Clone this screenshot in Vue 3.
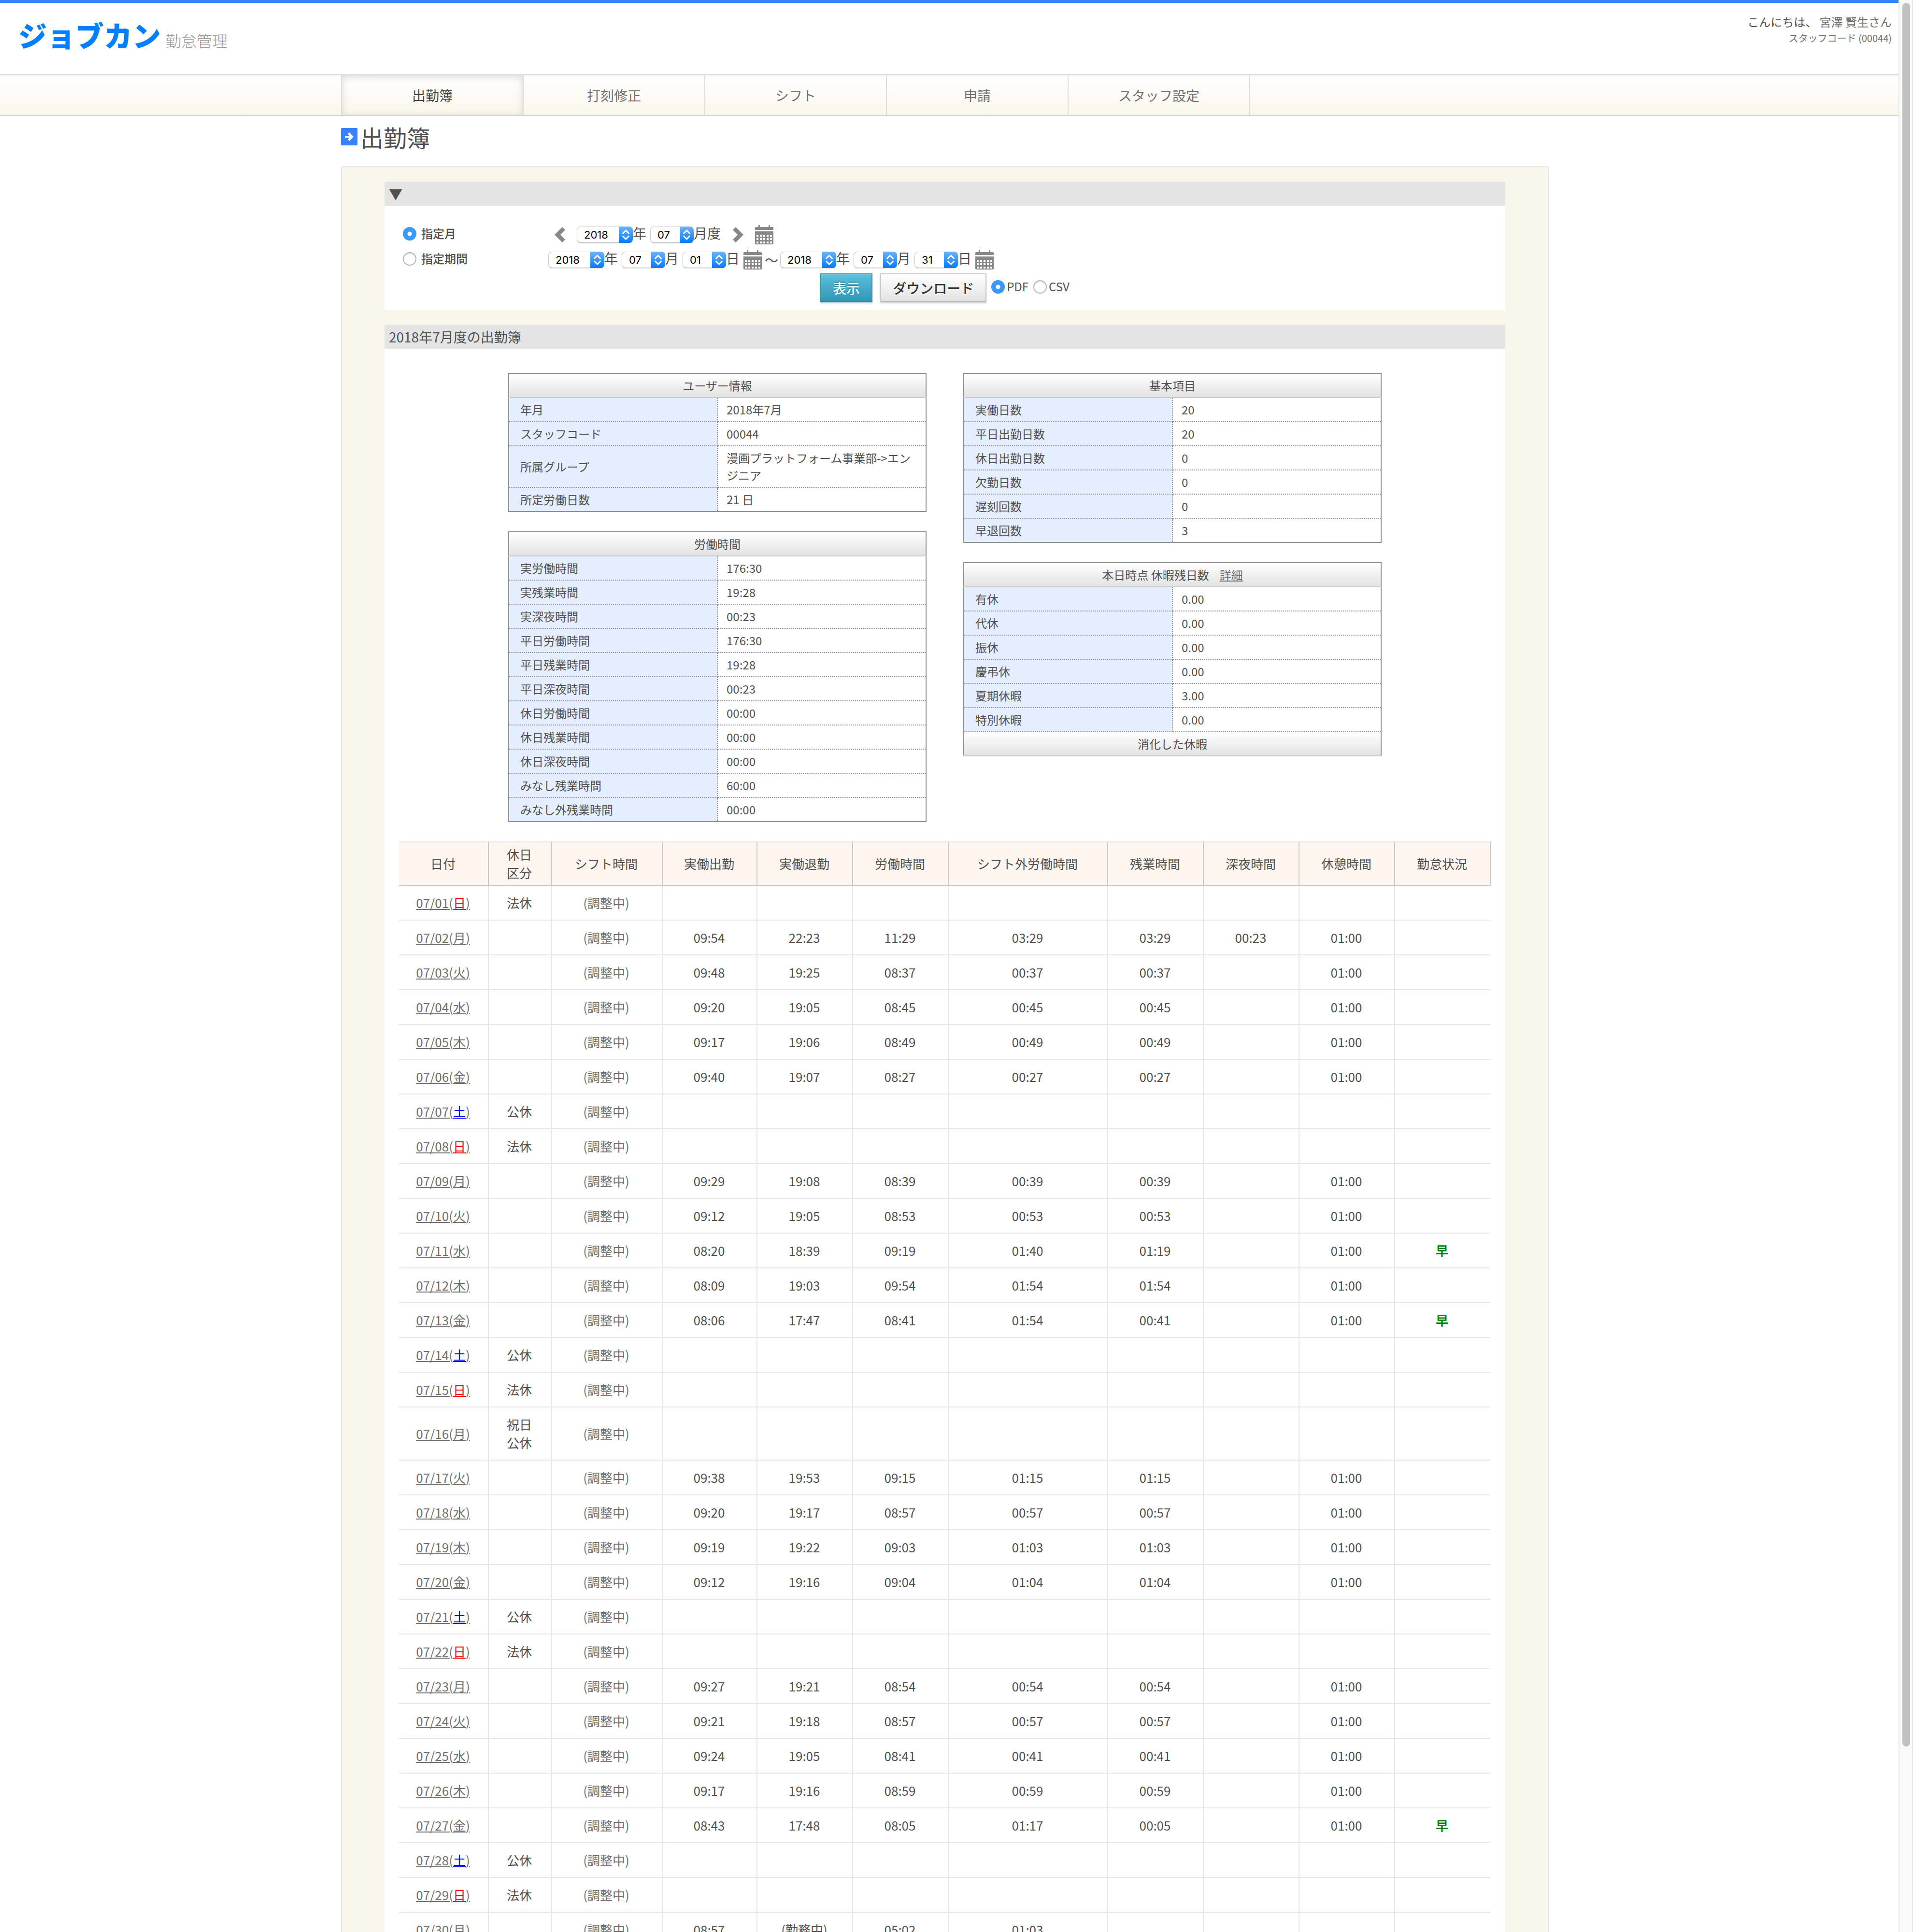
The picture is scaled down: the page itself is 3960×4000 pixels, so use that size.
<script setup>
import { ref } from 'vue'

const tabs = ['出勤簿', '打刻修正', 'シフト', '申請', 'スタッフ設定']

const rangeMode = ref('month')
const fileType = ref('pdf')

const userInfo = {
  title: 'ユーザー情報',
  rows: [
    ['年月', '2018年7月'],
    ['スタッフコード', '00044'],
    ['所属グループ', '漫画プラットフォーム事業部->エンジニア'],
    ['所定労働日数', '21 日'],
  ],
}
const workTime = {
  title: '労働時間',
  rows: [
    ['実労働時間', '176:30'],
    ['実残業時間', '19:28'],
    ['実深夜時間', '00:23'],
    ['平日労働時間', '176:30'],
    ['平日残業時間', '19:28'],
    ['平日深夜時間', '00:23'],
    ['休日労働時間', '00:00'],
    ['休日残業時間', '00:00'],
    ['休日深夜時間', '00:00'],
    ['みなし残業時間', '60:00'],
    ['みなし外残業時間', '00:00'],
  ],
}
const basics = {
  title: '基本項目',
  rows: [
    ['実働日数', '20'],
    ['平日出勤日数', '20'],
    ['休日出勤日数', '0'],
    ['欠勤日数', '0'],
    ['遅刻回数', '0'],
    ['早退回数', '3'],
  ],
}
const vacation = {
  title: '本日時点 休暇残日数',
  link: '詳細',
  footer: '消化した休暇',
  rows: [
    ['有休', '0.00'],
    ['代休', '0.00'],
    ['振休', '0.00'],
    ['慶弔休', '0.00'],
    ['夏期休暇', '3.00'],
    ['特別休暇', '0.00'],
  ],
}
const columns = [
  [userInfo, workTime],
  [basics, vacation],
]

const heads = ['日付', '休日\n区分', 'シフト時間', '実働出勤', '実働退勤', '労働時間', 'シフト外労働時間', '残業時間', '深夜時間', '休憩時間', '勤怠状況']

// [出勤, 退勤, 労働, シフト外, 残業, 深夜, 休憩, 状況]
const records = {
  2: ['09:54', '22:23', '11:29', '03:29', '03:29', '00:23', '01:00', ''],
  3: ['09:48', '19:25', '08:37', '00:37', '00:37', '', '01:00', ''],
  4: ['09:20', '19:05', '08:45', '00:45', '00:45', '', '01:00', ''],
  5: ['09:17', '19:06', '08:49', '00:49', '00:49', '', '01:00', ''],
  6: ['09:40', '19:07', '08:27', '00:27', '00:27', '', '01:00', ''],
  9: ['09:29', '19:08', '08:39', '00:39', '00:39', '', '01:00', ''],
  10: ['09:12', '19:05', '08:53', '00:53', '00:53', '', '01:00', ''],
  11: ['08:20', '18:39', '09:19', '01:40', '01:19', '', '01:00', '早'],
  12: ['08:09', '19:03', '09:54', '01:54', '01:54', '', '01:00', ''],
  13: ['08:06', '17:47', '08:41', '01:54', '00:41', '', '01:00', '早'],
  17: ['09:38', '19:53', '09:15', '01:15', '01:15', '', '01:00', ''],
  18: ['09:20', '19:17', '08:57', '00:57', '00:57', '', '01:00', ''],
  19: ['09:19', '19:22', '09:03', '01:03', '01:03', '', '01:00', ''],
  20: ['09:12', '19:16', '09:04', '01:04', '01:04', '', '01:00', ''],
  23: ['09:27', '19:21', '08:54', '00:54', '00:54', '', '01:00', ''],
  24: ['09:21', '19:18', '08:57', '00:57', '00:57', '', '01:00', ''],
  25: ['09:24', '19:05', '08:41', '00:41', '00:41', '', '01:00', ''],
  26: ['09:17', '19:16', '08:59', '00:59', '00:59', '', '01:00', ''],
  27: ['08:43', '17:48', '08:05', '01:17', '00:05', '', '01:00', '早'],
  30: ['08:57', '(勤務中)', '05:02', '01:03', '', '', '', ''],
}
const weekdays = ['日', '月', '火', '水', '木', '金', '土']
const days = Array.from({ length: 30 }, (_, i) => {
  const day = i + 1
  const w = i % 7
  let holiday = w === 0 ? '法休' : w === 6 ? '公休' : ''
  if (day === 16) holiday = '祝日\n公休'
  return {
    date: `07/${String(day).padStart(2, '0')}`,
    weekday: weekdays[w],
    tone: w === 0 ? 'sun' : w === 6 ? 'sat' : '',
    holiday,
    cells: records[day] || Array(8).fill(''),
  }
})

const monthParts = [
  { value: '2018', unit: '年', name: '対象年' },
  { value: '07', unit: '月度', name: '対象月' },
]
const ranges = [
  [
    { value: '2018', unit: '年', name: '開始年' },
    { value: '07', unit: '月', name: '開始月' },
    { value: '01', unit: '日', name: '開始日' },
  ],
  [
    { value: '2018', unit: '年', name: '終了年' },
    { value: '07', unit: '月', name: '終了月' },
    { value: '31', unit: '日', name: '終了日' },
  ],
]
</script>

<template>
  <svg class="defs" aria-hidden="true">
    <symbol id="calendar" viewBox="0 0 38 40">
      <path d="M7 0h3v4h18V0h3v4h5a2 2 0 0 1 2 2v4H0V6a2 2 0 0 1 2-2h5z" />
      <path
        fill-rule="evenodd"
        d="M0 13h38v25a2 2 0 0 1-2 2H2a2 2 0 0 1-2-2zM3 20v4h4v-4zM10 20v4h4v-4zM17 20v4h4v-4zM24 20v4h4v-4zM31 20v4h4v-4zM3 27v4h4v-4zM10 27v4h4v-4zM17 27v4h4v-4zM24 27v4h4v-4zM31 27v4h4v-4zM3 34v4h4v-4zM10 34v4h4v-4zM17 34v4h4v-4zM24 34v4h4v-4zM31 34v4h4v-4z"
      />
    </symbol>
    <symbol id="stepper" viewBox="0 0 28 34">
      <path d="M8 14l6-6 6 6M8 20l6 6 6-6" fill="none" stroke="#fff" stroke-width="3" stroke-linecap="round" stroke-linejoin="round" />
    </symbol>
  </svg>

  <div class="screen">
    <div class="page">
      <header class="header">
        <a class="brand" href="#">
          <span class="brand-name">ジョブカン</span>
          <span class="brand-sub">勤怠管理</span>
        </a>
        <div class="user">
          <p class="hello">こんにちは、 <span>宮澤 賢生さん</span></p>
          <p class="code">スタッフコード (00044)</p>
        </div>
      </header>

      <nav class="nav">
        <div class="tabs">
          <a v-for="(t, i) in tabs" :key="t" href="#" class="tab" :class="{ active: i === 0 }">{{ t }}</a>
        </div>
      </nav>

      <main class="content">
        <h1 class="title">
          <svg width="34" height="36" viewBox="0 0 34 36" aria-hidden="true">
            <rect width="34" height="36" rx="2" fill="#3781fa" />
            <path d="M8 16h9l-3-4 3-3 9 9-9 9-3-3 3-4H8z" fill="#fff" />
          </svg>
          出勤簿
        </h1>

        <div class="panel">
          <section class="card">
            <h2 class="bar">▼</h2>
            <form class="filter" @submit.prevent>
              <div class="row">
                <label class="mode"><input v-model="rangeMode" type="radio" name="range" value="month" /><span>指定月</span></label>
                <button type="button" class="icon arrow" aria-label="前の月">
                  <svg width="22" height="32" viewBox="0 0 22 32"><path d="M16 0l6 6-10 10 10 10-6 6L0 16z" /></svg>
                </button>
                <span v-for="p in monthParts" :key="p.name" class="part">
                  <span class="picker">
                    <select :aria-label="p.name" :class="{ wide: p.value.length > 2 }"><option>{{ p.value }}</option></select>
                    <svg class="stepper"><use href="#stepper" /></svg>
                  </span>
                  <span class="unit">{{ p.unit }}</span>
                </span>
                <button type="button" class="icon arrow next" aria-label="次の月">
                  <svg width="22" height="32" viewBox="0 0 22 32"><path d="M6 0l16 16L6 32l-6-6 10-10L0 6z" /></svg>
                </button>
                <button type="button" class="icon" aria-label="カレンダー"><svg width="38" height="40"><use href="#calendar" /></svg></button>
              </div>
              <div class="row">
                <label class="mode"><input v-model="rangeMode" type="radio" name="range" value="period" /><span>指定期間</span></label>
                <template v-for="(r, i) in ranges" :key="i">
                  <span v-if="i" class="tilde">～</span>
                  <span v-for="p in r" :key="p.name" class="part">
                    <span class="picker">
                      <select :aria-label="p.name" :class="{ wide: p.value.length > 2 }"><option>{{ p.value }}</option></select>
                      <svg class="stepper"><use href="#stepper" /></svg>
                    </span>
                    <span class="unit">{{ p.unit }}</span>
                  </span>
                  <button type="button" class="icon" aria-label="カレンダー"><svg width="38" height="40"><use href="#calendar" /></svg></button>
                </template>
              </div>
              <div class="actions">
                <button type="submit" class="btn primary">表示</button>
                <button type="button" class="btn">ダウンロード</button>
                <div class="types">
                  <label><input v-model="fileType" type="radio" name="type" value="pdf" /><span>PDF</span></label>
                  <label><input v-model="fileType" type="radio" name="type" value="csv" /><span>CSV</span></label>
                </div>
              </div>
            </form>
          </section>

          <section class="card">
            <h2 class="bar">2018年7月度の出勤簿</h2>
            <div class="report">
              <div class="summary">
                <div v-for="(col, c) in columns" :key="c" class="summary-col">
                  <table v-for="t in col" :key="t.title" class="info">
                    <thead>
                      <tr>
                        <th colspan="2">{{ t.title }}<a v-if="t.link" href="#">{{ t.link }}</a></th>
                      </tr>
                    </thead>
                    <tbody>
                      <tr v-for="r in t.rows" :key="r[0]">
                        <th scope="row">{{ r[0] }}</th>
                        <td>{{ r[1] }}</td>
                      </tr>
                    </tbody>
                    <tfoot v-if="t.footer">
                      <tr>
                        <th colspan="2">{{ t.footer }}</th>
                      </tr>
                    </tfoot>
                  </table>
                </div>
              </div>

              <table class="days">
                <colgroup>
                  <col v-for="n in 11" :key="n" :class="'c' + n" />
                </colgroup>
                <thead>
                  <tr>
                    <th v-for="h in heads" :key="h" scope="col">{{ h }}</th>
                  </tr>
                </thead>
                <tbody>
                  <tr v-for="d in days" :key="d.date">
                    <td><a href="#">{{ d.date }}(<span :class="d.tone">{{ d.weekday }}</span>)</a></td>
                    <td>{{ d.holiday }}</td>
                    <td class="muted">(調整中)</td>
                    <td v-for="(v, i) in d.cells" :key="i" :class="{ status: i === 7 }">{{ v }}</td>
                  </tr>
                </tbody>
              </table>
            </div>
          </section>
        </div>
      </main>
    </div>
    <div class="scrollbar" aria-hidden="true"><div class="thumb"></div></div>
  </div>
</template>

<style>
body {
  margin: 0;
  background: #fff;
}
</style>

<style scoped>
.defs {
  position: absolute;
  width: 0;
  height: 0;
}
.screen {
  display: flex;
  height: 100vh;
  overflow: hidden;
  color: #505050;
  font-family: "Noto Sans CJK JP", sans-serif;
  font-size: 24px;
}
.page {
  flex: 1;
  min-width: 0;
}
h1, h2, p {
  margin: 0;
  font-weight: 400;
}
a {
  color: #707070;
}
button, select {
  font-family: inherit;
}

.header {
  display: flex;
  justify-content: space-between;
  height: 148px;
  border-top: 6px solid #3781fa;
}
.brand {
  display: flex;
  align-items: baseline;
  gap: 10px;
  padding: 24px 0 0 38px;
  text-decoration: none;
}
.brand-name {
  color: #007fff;
  font-size: 59px;
  font-weight: 900;
  line-height: 84px;
}
.brand-sub {
  color: #999;
  font-size: 32px;
  font-weight: 300;
}
.user {
  padding: 22px 14px 0 0;
  text-align: right;
}
.hello {
  line-height: 34px;
}
.hello span {
  color: #707070;
}
.code {
  color: #707070;
  font-size: 20px;
  line-height: 34px;
}

.nav {
  padding-right: 18px;
  border: solid #d3d3d3;
  border-width: 2px 0;
  background: linear-gradient(#fff, #fdf9f3 70%, #f9f6e9);
}
.tabs {
  display: flex;
  max-width: 2500px;
  margin: 0 auto;
}
.tab {
  box-sizing: border-box;
  width: 376px;
  border-right: 2px solid #ddd;
  font-size: 28px;
  line-height: 82px;
  text-align: center;
  text-decoration: none;
}
.tab.active {
  width: 378px;
  border-left: 2px solid #ddd;
  color: #444;
  box-shadow: inset 0 4px 16px rgba(0, 0, 0, 0.14);
}

.content {
  max-width: 2500px;
  margin: 0 auto;
  padding-right: 18px;
}
.title {
  display: flex;
  align-items: center;
  gap: 6px;
  padding: 7px 0 25px;
  font-size: 48px;
  line-height: 72px;
}
.panel {
  display: flex;
  flex-direction: column;
  gap: 30px;
  padding: 30px 88px;
  border: 2px solid #e8e8e8;
  border-radius: 4px;
  background: #f9f6eb;
}
.card {
  background: #fff;
}
.bar {
  padding-left: 9px;
  background: #e4e4e4;
  font-size: 28px;
  line-height: 50px;
}

.filter {
  padding: 34px 38px 16px;
}
.row {
  display: flex;
  align-items: center;
  height: 52px;
}
input[type="radio"] {
  box-sizing: border-box;
  width: 28px;
  height: 28px;
  margin: 0;
  appearance: none;
  border: 2px solid #b5b5b5;
  border-radius: 50%;
  background: #fff;
  box-shadow: inset 0 2px 2px rgba(0, 0, 0, 0.1);
}
input[type="radio"]:checked {
  border-color: #3b99fc;
  background: radial-gradient(circle, #fff 4px, #3b99fc 5px);
  box-shadow: none;
}
.mode {
  display: flex;
  align-items: center;
  gap: 10px;
  width: 301px;
  padding-bottom: 4px;
  font-weight: 500;
}
.mode span, .types span {
  padding-bottom: 4px;
}
.icon {
  display: flex;
  padding: 0;
  border: 0;
  background: none;
  fill: #888;
}
.arrow {
  margin: 0 24px 0 13px;
}
.arrow.next {
  margin-left: 17px;
}
.part {
  display: flex;
  align-items: center;
  margin-right: 8px;
}
.picker {
  display: grid;
}
.picker > * {
  grid-area: 1 / 1;
}
select {
  box-sizing: border-box;
  width: 90px;
  height: 34px;
  padding: 0 0 0 14px;
  appearance: none;
  border: 1px solid #ccc;
  border-bottom-color: #aaa;
  border-radius: 8px;
  background: #fff;
  box-shadow: 0 1px 2px rgba(0, 0, 0, 0.15);
  color: #000;
  font-family: Inter, "Liberation Sans", sans-serif;
  font-size: 22px;
}
select.wide {
  width: 116px;
}
.stepper {
  justify-self: end;
  width: 29px;
  height: 34px;
  border-radius: 0 8px 8px 0;
  background: linear-gradient(#6cb3fa, #067aff);
  pointer-events: none;
}
.unit {
  padding-bottom: 8px;
  font-size: 28px;
}
.tilde {
  margin: 0 4px 0 6px;
  font-size: 28px;
}
.actions {
  display: flex;
  justify-content: center;
  padding-top: 2px;
}
.btn {
  height: 60px;
  margin-right: 16px;
  padding: 0 24px;
  border: 2px solid #c8c8c8;
  border-bottom-color: #aaa;
  background: linear-gradient(#fff, #e2e2e2);
  box-shadow: 0 2px 4px rgba(0, 0, 0, 0.15);
  color: #333;
  font-size: 28px;
  font-weight: 500;
  text-shadow: 0 2px 2px #fff;
}
.btn.primary {
  border-color: #3a93ad #3a93ad #2d7f97;
  background: linear-gradient(#5bc0de, #2f96b4);
  box-shadow: inset 0 2px 0 #7ccbe3, 0 2px 4px rgba(0, 0, 0, 0.15);
  color: #fff;
  text-shadow: 0 -2px 0 rgba(0, 0, 0, 0.25);
}
.types {
  display: flex;
  gap: 10px;
  margin-left: -6px;
}
.types label {
  display: flex;
  align-items: center;
  gap: 4px;
  height: 56px;
}

.report {
  padding: 50px 30px 30px;
}
.summary {
  display: flex;
  justify-content: center;
  gap: 76px;
  margin-bottom: 40px;
}
.summary-col {
  display: flex;
  flex-direction: column;
  gap: 40px;
  width: 866px;
}
.info {
  width: 100%;
  border: 2px solid #909090;
  border-collapse: collapse;
  table-layout: fixed;
  line-height: 36px;
}
.info th, .info td {
  padding: 6px 18px;
  font-weight: 400;
}
.info thead th, .info tfoot th {
  border-bottom: 2px solid #c8c8c8;
  background: linear-gradient(#fff, #e2e2e2);
}
.info thead a {
  margin-left: 22px;
}
.info tbody th, .info tbody td {
  border-bottom: 2px dotted #909090;
  text-align: left;
}
.info tbody:last-child tr:last-child > * {
  border-bottom: 2px solid #909090;
}
.info tbody th {
  padding-left: 23px;
  border-right: 2px dotted #909090;
  background: #e5eeff;
}

.days {
  width: 100%;
  border-spacing: 0;
  table-layout: fixed;
  font-size: 26px;
  line-height: 38px;
  text-align: center;
  white-space: pre-line;
}
.c1 { width: 186px; }
.c2 { width: 130px; }
.c3 { width: 230px; }
.c4 { width: 196px; }
.c7 { width: 330px; }
.c5, .c6, .c8, .c9, .c10, .c11 { width: 198px; }
.days th {
  padding: 6px 2px 6px 0;
  border: solid #c8c8c8;
  border-width: 2px 2px 2px 0;
  border-top-color: #e6e6e6;
  background: #fff5ef;
  font-weight: 400;
}
.days td {
  height: 38px;
  padding: 16px 2px 16px 0;
  border: solid #e6e6e6;
  border-width: 0 2px 2px 0;
}
.days td:last-child {
  border-right-color: #fff;
}
.muted {
  color: #707070;
}
.sun {
  color: #f00;
  text-decoration: underline;
}
.sat {
  color: #00f;
  text-decoration: underline;
}
.status {
  color: #008000;
  font-weight: 700;
}

.scrollbar {
  box-sizing: border-box;
  width: 30px;
  height: 100%;
  padding: 6px 4px 14px 6px;
  border: solid #e8e8e8;
  border-width: 0 2px;
  background: #fafafa;
}
.thumb {
  width: 16px;
  height: 90.7%;
  border-radius: 8px;
  background: #c1c1c1;
}
</style>
